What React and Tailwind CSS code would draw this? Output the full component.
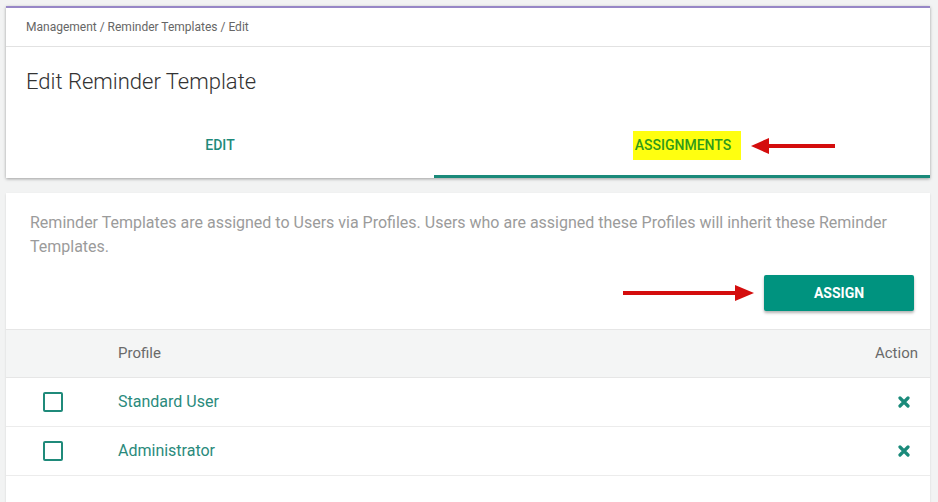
import React from "react";

function ArrowLeft() {
  return (
    <svg width="84" height="18" viewBox="0 0 84 18" className="block">
      <rect x="14" y="7" width="70" height="4" fill="#d40d0d" />
      <polygon points="0,9 18,1 18,17" fill="#d40d0d" />
    </svg>
  );
}

function ArrowRight() {
  return (
    <svg width="131" height="18" viewBox="0 0 131 18" className="block">
      <rect x="0" y="7" width="116" height="4" fill="#d40d0d" />
      <polygon points="131,9 112,1 112,17" fill="#d40d0d" />
    </svg>
  );
}

function XIcon() {
  return (
    <svg width="12" height="12" viewBox="0 0 12 12" className="block">
      <path d="M2 2 L10 10 M10 2 L2 10" stroke="#1a8a7a" strokeWidth="3.2" strokeLinecap="round" />
    </svg>
  );
}

function Row({ name }) {
  return (
    <div className="flex h-[49px] items-center border-b border-[#ececec]">
      <div className="w-[112px] pl-[37px]">
        <div className="h-5 w-5 rounded-[2px] border-2 border-[#1f8a7a]" />
      </div>
      <div className="flex-1 text-[16px] text-[#2a8a7c]">{name}</div>
      <div className="pr-[20px]">
        <XIcon />
      </div>
    </div>
  );
}

export default function App() {
  return (
    <div
      className="min-h-[502px] bg-[#f2f3f3] pl-[6px] pr-[8px] pt-[6px]"
      style={{ fontFamily: "Roboto, 'Noto Sans', sans-serif" }}
    >
      <div className="border-t-2 border-[#9787c6] bg-white shadow-[0_1px_3px_rgba(0,0,0,0.35)]">
        <div className="flex h-[39px] items-center border-b border-[#e2e2e2] px-5 text-[12px] text-[#666]">
          Management / Reminder Templates / Edit
        </div>
        <div
          className="flex h-[68px] items-center px-5 text-[22px] font-light text-[#333]"
          style={{ fontFamily: "'Roboto Light', Roboto, sans-serif" }}
        >
          Edit Reminder Template
        </div>
        <div className="flex h-[63px]">
          <div className="flex w-[428px] items-center justify-center border-b-[3px] border-transparent text-[14px] font-medium text-[#1f8a7a]">
            EDIT
          </div>
          <div className="flex flex-1 items-center justify-center border-b-[3px] border-[#1a8a7a]">
            <span className="relative ml-[10px] inline-flex h-[29px] items-center bg-[#ffff10] pl-[2px] pr-[10px] text-[14px] font-medium text-[#2f9a1a]">
              ASSIGNMENTS
              <span className="absolute left-full top-[6px] ml-[10px]">
                <ArrowLeft />
              </span>
            </span>
          </div>
        </div>
      </div>

      <div className="mt-[15px] min-h-[310px] bg-white shadow-[0_1px_2px_rgba(0,0,0,0.12)]">
        <p className="px-6 pt-[18px] text-[16px] leading-[24px] text-[#9b9b9b]">
          Reminder Templates are assigned to Users via Profiles. Users who are assigned these Profiles will inherit these Reminder Templates.
        </p>
        <div className="mt-[16px] flex items-center justify-end gap-[10px] pb-[18px] pr-4">
          <ArrowRight />
          <button className="h-9 w-[150px] rounded-[2px] bg-[#00937f] text-[14px] font-bold text-white shadow-[0_2px_3px_rgba(0,0,0,0.3)]">
            ASSIGN
          </button>
        </div>
        <div className="flex h-[49px] items-center border-y border-[#e6e6e6] bg-[#f4f5f5] text-[15px] text-[#6a6a6a]">
          <div className="w-[112px]" />
          <div className="flex-1">Profile</div>
          <div className="pr-3">Action</div>
        </div>
        <Row name="Standard User" />
        <Row name="Administrator" />
      </div>
    </div>
  );
}
